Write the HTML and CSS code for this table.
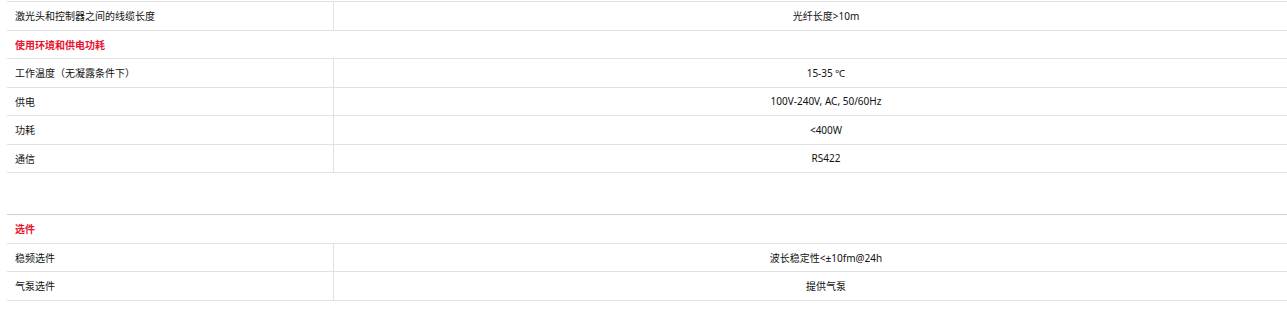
FILE: index.html
```html
<!DOCTYPE html>
<html lang="zh">
<head>
<meta charset="utf-8">
<title>参数</title>
<link rel="stylesheet" href="styles.css">
</head>
<body>
<div class="page">
  <div class="spec">
    <div class="row">
      <div class="label">激光头和控制器之间的线缆长度</div>
      <div class="value">光纤长度&gt;10m</div>
    </div>
    <div class="row section">
      <div class="title">使用环境和供电功耗</div>
    </div>
    <div class="row">
      <div class="label">工作温度（无凝露条件下）</div>
      <div class="value">15-35 ℃</div>
    </div>
    <div class="row">
      <div class="label">供电</div>
      <div class="value">100V-240V, AC, 50/60Hz</div>
    </div>
    <div class="row">
      <div class="label">功耗</div>
      <div class="value">&lt;400W</div>
    </div>
    <div class="row">
      <div class="label">通信</div>
      <div class="value">RS422</div>
    </div>
  </div>

  <div class="spec spec-second">
    <div class="row section">
      <div class="title">选件</div>
    </div>
    <div class="row">
      <div class="label">稳频选件</div>
      <div class="value">波长稳定性&lt;±10fm@24h</div>
    </div>
    <div class="row">
      <div class="label">气泵选件</div>
      <div class="value">提供气泵</div>
    </div>
  </div>
</div>
</body>
</html>
```

FILE: styles.css
```css
html, body {
  margin: 0;
  padding: 0;
  background: #ffffff;
}

body {
  font-family: "Noto Sans", "Noto Sans CJK SC", sans-serif;
  font-size: 10px;
  color: #111111;
}

.page {
  padding-left: 7px;
  padding-top: 1px;
}

.spec {
  border-top: 1px solid #e2e2e2;
}

.spec-second {
  margin-top: 41px;
  border-top-color: #cfcfcf;
}

.row {
  display: grid;
  grid-template-columns: 327px 1fr;
  height: 28.5px;
  box-sizing: border-box;
  border-bottom: 1px solid #e2e2e2;
}

.row.section {
  grid-template-columns: 1fr;
}

.label {
  display: flex;
  align-items: center;
  padding-left: 8px;
  border-right: 1px solid #e2e2e2;
  white-space: nowrap;
}

.value {
  display: flex;
  align-items: center;
  justify-content: center;
  padding-left: 31px;
  white-space: nowrap;
}

.title {
  display: flex;
  align-items: center;
  padding-left: 8px;
  color: #e8132f;
  font-weight: bold;
}
```
